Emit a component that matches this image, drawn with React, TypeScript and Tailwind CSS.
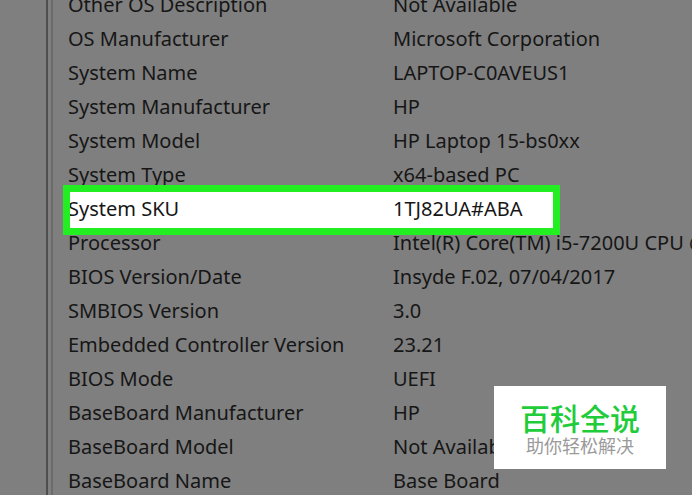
import React from "react";

const rows: [string, string][] = [
  ["Other OS Description", "Not Available"],
  ["OS Manufacturer", "Microsoft Corporation"],
  ["System Name", "LAPTOP-C0AVEUS1"],
  ["System Manufacturer", "HP"],
  ["System Model", "HP Laptop 15-bs0xx"],
  ["System Type", "x64-based PC"],
  ["System SKU", "1TJ82UA#ABA"],
  ["Processor", "Intel(R) Core(TM) i5-7200U CPU @ 2.50GHz"],
  ["BIOS Version/Date", "Insyde F.02, 07/04/2017"],
  ["SMBIOS Version", "3.0"],
  ["Embedded Controller Version", "23.21"],
  ["BIOS Mode", "UEFI"],
  ["BaseBoard Manufacturer", "HP"],
  ["BaseBoard Model", "Not Available"],
  ["BaseBoard Name", "Base Board"],
];

function Row({ label, value, marked }: { label: string; value: string; marked?: boolean }) {
  return (
    <div className="relative flex h-[34px] items-center whitespace-nowrap">
      {marked && (
        <div className="absolute left-[10px] top-[-7px] h-[50px] w-[497px] bg-white" />
      )}
      <div className="relative z-10 w-[340px] shrink-0 pl-[15px]">{label}</div>
      <div className="relative z-10">{value}</div>
      {marked && (
        <div className="absolute left-[10px] top-[-7px] z-20 h-[50px] w-[497px] border-[7px] border-[#22ee22]" />
      )}
    </div>
  );
}

export default function App() {
  return (
    <div
      className="relative flex h-[495px] w-[692px] overflow-hidden bg-[#7f7f7f] text-[20px] leading-[34px] text-[#161616]"
      style={{ fontFamily: '"Noto Sans", "Open Sans", sans-serif' }}
    >
      <div className="w-[48px] shrink-0 border-r-2 border-[#4f4f4f]" />
      <div className="w-[3px] shrink-0" />
      <div className="flex-1 border-l-2 border-[#6b6b6b]">
        <div className="mt-[-12px]">
          {rows.map(([l, v]) => (
            <Row key={l} label={l} value={v} marked={l === "System SKU"} />
          ))}
        </div>
      </div>
      <div
        className="absolute left-[494px] top-[386px] z-30 flex h-[83px] w-[172px] flex-col items-center bg-white pt-[14px]"
        style={{ fontFamily: '"Noto Sans CJK SC", sans-serif' }}
      >
        <div className="text-[30px] font-medium leading-[34px] text-[#1fcc3a]">百科全说</div>
        <div className="text-[18px] leading-[22px] text-[#9a9a9a]">助你轻松解决</div>
      </div>
    </div>
  );
}
